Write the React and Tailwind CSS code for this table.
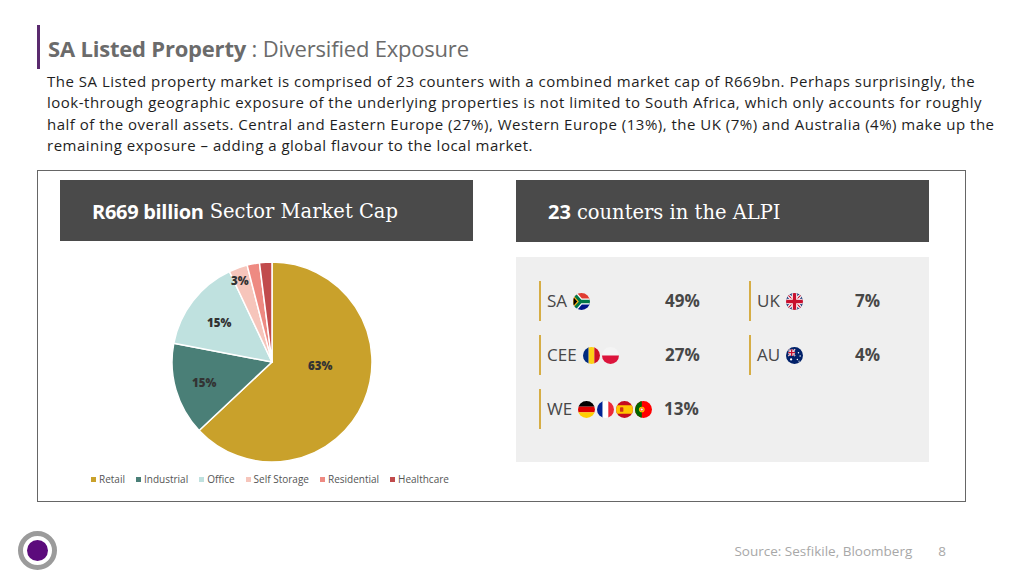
import React from 'react';

const sans = { fontFamily: '"Open Sans", "Liberation Sans", sans-serif' };
const serif = { fontFamily: '"DejaVu Serif", "Liberation Serif", serif' };

const sectors = [
  { name: 'Retail', value: 63, color: '#c9a12b' },
  { name: 'Industrial', value: 15, color: '#4a7f77' },
  { name: 'Office', value: 15, color: '#bfe1df' },
  { name: 'Self Storage', value: 3, color: '#f6c5bb' },
  { name: 'Residential', value: 2, color: '#ee8a82' },
  { name: 'Healthcare', value: 2, color: '#c14b4c' },
];

function slicePath(cx, cy, r, a0, a1) {
  const p = a => [cx + r * Math.sin(a * 2 * Math.PI), cy - r * Math.cos(a * 2 * Math.PI)];
  const [x0, y0] = p(a0);
  const [x1, y1] = p(a1);
  const large = a1 - a0 > 0.5 ? 1 : 0;
  return `M${cx},${cy} L${x0},${y0} A${r},${r} 0 ${large} 1 ${x1},${y1} Z`;
}

function Pie() {
  let acc = 0;
  const slices = sectors.map(s => {
    const a0 = acc / 100;
    acc += s.value;
    return { ...s, d: slicePath(101, 101, 100, a0, acc / 100) };
  });
  return (
    <svg width="202" height="202" viewBox="0 0 202 202">
      {slices.map(s => (
        <path key={s.name} d={s.d} fill={s.color} stroke="#ffffff" strokeWidth="1.5" strokeLinejoin="round" />
      ))}
      <g fontFamily='"Open Sans", sans-serif' fontWeight="800" fontSize="11.5" fill="#333">
        <text x="137" y="109">63%</text>
        <text x="21" y="126">15%</text>
        <text x="36" y="66">15%</text>
        <text x="60" y="24">3%</text>
      </g>
    </svg>
  );
}

function Flag({ children }) {
  return (
    <span className="inline-block w-[17px] h-[17px] rounded-full overflow-hidden shrink-0">
      <svg width="17" height="17" viewBox="0 0 60 60">{children}</svg>
    </span>
  );
}

const UnionJack = ({ w = 60, h = 60 }) => (
  <g>
    <rect width={w} height={h} fill="#012169" />
    <path d={`M0,0 L${w},${h} M${w},0 L0,${h}`} stroke="#fff" strokeWidth={w / 5} />
    <path d={`M0,0 L${w},${h} M${w},0 L0,${h}`} stroke="#c8102e" strokeWidth={w / 15} />
    <path d={`M${w / 2},0 V${h} M0,${h / 2} H${w}`} stroke="#fff" strokeWidth={w / 3} />
    <path d={`M${w / 2},0 V${h} M0,${h / 2} H${w}`} stroke="#c8102e" strokeWidth={w / 5} />
  </g>
);

const flags = {
  za: (
    <Flag>
      <rect width="60" height="30" fill="#e03c31" />
      <rect y="30" width="60" height="30" fill="#001489" />
      <path d="M0,0 L26,30 L60,30 M0,60 L26,30" stroke="#fff" strokeWidth="22" fill="none" />
      <path d="M0,0 L26,30 L60,30 M0,60 L26,30" stroke="#007749" strokeWidth="13" fill="none" />
      <path d="M0,10 L18,30 L0,50 Z" fill="#000" stroke="#ffb81c" strokeWidth="4" />
    </Flag>
  ),
  ro: (
    <Flag>
      <rect width="20" height="60" fill="#002b7f" />
      <rect x="20" width="20" height="60" fill="#fcd116" />
      <rect x="40" width="20" height="60" fill="#ce1126" />
    </Flag>
  ),
  pl: (
    <Flag>
      <rect width="60" height="30" fill="#f4f4f4" />
      <rect y="30" width="60" height="30" fill="#dc143c" />
    </Flag>
  ),
  de: (
    <Flag>
      <rect width="60" height="20" fill="#000" />
      <rect y="20" width="60" height="20" fill="#dd0000" />
      <rect y="40" width="60" height="20" fill="#ffce00" />
    </Flag>
  ),
  fr: (
    <Flag>
      <rect width="20" height="60" fill="#002395" />
      <rect x="20" width="20" height="60" fill="#fff" />
      <rect x="40" width="20" height="60" fill="#ed2939" />
    </Flag>
  ),
  es: (
    <Flag>
      <rect width="60" height="60" fill="#c60b1e" />
      <rect y="15" width="60" height="30" fill="#ffc400" />
      <rect x="14" y="22" width="12" height="16" rx="3" fill="#c60b1e" opacity="0.8" />
    </Flag>
  ),
  pt: (
    <Flag>
      <rect width="60" height="60" fill="#ff0000" />
      <rect width="24" height="60" fill="#006600" />
      <circle cx="24" cy="30" r="10" fill="#ffcc00" />
      <circle cx="24" cy="30" r="5" fill="#fff" stroke="#ff0000" strokeWidth="2" />
    </Flag>
  ),
  uk: (
    <Flag>
      <UnionJack />
    </Flag>
  ),
  au: (
    <Flag>
      <rect width="60" height="60" fill="#012169" />
      <g transform="translate(8,8) scale(0.4)">
        <UnionJack />
      </g>
      <circle cx="18" cy="44" r="4" fill="#fff" />
      <circle cx="44" cy="20" r="2.5" fill="#fff" />
      <circle cx="50" cy="32" r="2.5" fill="#fff" />
      <circle cx="40" cy="44" r="2.5" fill="#fff" />
      <circle cx="46" cy="50" r="2" fill="#fff" />
    </Flag>
  ),
};

function Region({ label, flagKeys, value, labelWidth }) {
  return (
    <div className="flex items-center h-[40px] border-l-[2px] border-[#d6ad45] pl-[6px]">
      <div className={`flex items-center gap-[6px] ${labelWidth}`}>
        <span className="text-[17px] text-[#474747]">{label}</span>
        <span className="flex gap-[2px]">
          {flagKeys.map(k => (
            <React.Fragment key={k}>{flags[k]}</React.Fragment>
          ))}
        </span>
      </div>
      <span className="text-[17px] font-bold text-[#474747]">{value}</span>
    </div>
  );
}

export default function App() {
  return (
    <div className="w-[1024px] h-[576px] bg-white overflow-hidden" style={sans}>
      {/* Title */}
      <div className="pt-[25px] pl-[37px]">
        <div className="h-[44px] border-l-[3px] border-[#5a2a6e] pl-[8px] flex items-center">
          <h1 className="text-[22px] text-[#6b6b6b] tracking-[-0.2px] pt-[3px]">
            <span className="font-bold">SA Listed Property</span> : Diversified Exposure
          </h1>
        </div>
      </div>

      {/* Intro */}
      <p className="ml-[47px] mt-[2px] text-[15px] leading-[21.3px] tracking-[0.5px] text-[#1e1e1e] whitespace-nowrap">
        The SA Listed property market is comprised of 23 counters with a combined market cap of R669bn. Perhaps surprisingly, the
        <br />
        look-through geographic exposure of the underlying properties is not limited to South Africa, which only accounts for roughly
        <br />
        half of the overall assets. Central and Eastern Europe (27%), Western Europe (13%), the UK (7%) and Australia (4%) make up the
        <br />
        remaining exposure – adding a global flavour to the local market.
      </p>

      {/* Panels */}
      <div className="ml-[37px] mt-[14px] w-[929px] h-[332px] border border-[#666] pt-[9px] pl-[22px] flex gap-[43px]">
        <div className="w-[413px] flex flex-col">
          <div className="h-[61px] bg-[#4a4a4a] flex items-center pl-[32px] pt-[2px] text-white">
            <span className="text-[20px] font-bold tracking-[-0.3px]">R669 billion</span>
            <span className="text-[19.5px] ml-[6px]" style={serif}>Sector Market Cap</span>
          </div>
          <div className="mt-[20px] ml-[111px]">
            <Pie />
          </div>
          <div className="mt-[9px] ml-[31px] flex items-center gap-[11px] text-[10px] text-[#555]">
            {sectors.map(s => (
              <div key={s.name} className="flex items-center gap-[3px]">
                <span className="w-[5px] h-[5px]" style={{ backgroundColor: s.color }} />
                <span>{s.name}</span>
              </div>
            ))}
          </div>
        </div>

        <div className="w-[413px] flex flex-col">
          <div className="h-[62px] bg-[#4a4a4a] flex items-center pl-[32px] pt-[2px] text-white">
            <span className="text-[20px] font-bold">23</span>
            <span className="text-[19.5px] ml-[6px]" style={serif}>counters in the ALPI</span>
          </div>
          <div className="mt-[15px] h-[205px] bg-[#efefef] pt-[24px] pl-[23px] flex flex-col gap-[14px]">
            <div className="flex">
              <div className="w-[210px]">
                <Region label="SA" flagKeys={['za']} value="49%" labelWidth="w-[118px]" />
              </div>
              <Region label="UK" flagKeys={['uk']} value="7%" labelWidth="w-[98px]" />
            </div>
            <div className="flex">
              <div className="w-[210px]">
                <Region label="CEE" flagKeys={['ro', 'pl']} value="27%" labelWidth="w-[118px]" />
              </div>
              <Region label="AU" flagKeys={['au']} value="4%" labelWidth="w-[98px]" />
            </div>
            <div className="flex">
              <Region label="WE" flagKeys={['de', 'fr', 'es', 'pt']} value="13%" labelWidth="w-[117px]" />
            </div>
          </div>
        </div>
      </div>

      {/* Footer */}
      <div className="flex items-center mt-[29px] pl-[18px] pr-[78px]">
        <div className="w-[39px] h-[39px] rounded-full border-[5px] border-[#9b9b9b] flex items-center justify-center">
          <div className="w-[21px] h-[21px] rounded-full bg-[#5c0b7c]" />
        </div>
        <div className="ml-auto flex items-center gap-[26px] text-[13.5px] text-[#a8a8a8]">
          <span>Source: Sesfikile, Bloomberg</span>
          <span>8</span>
        </div>
      </div>
    </div>
  );
}
